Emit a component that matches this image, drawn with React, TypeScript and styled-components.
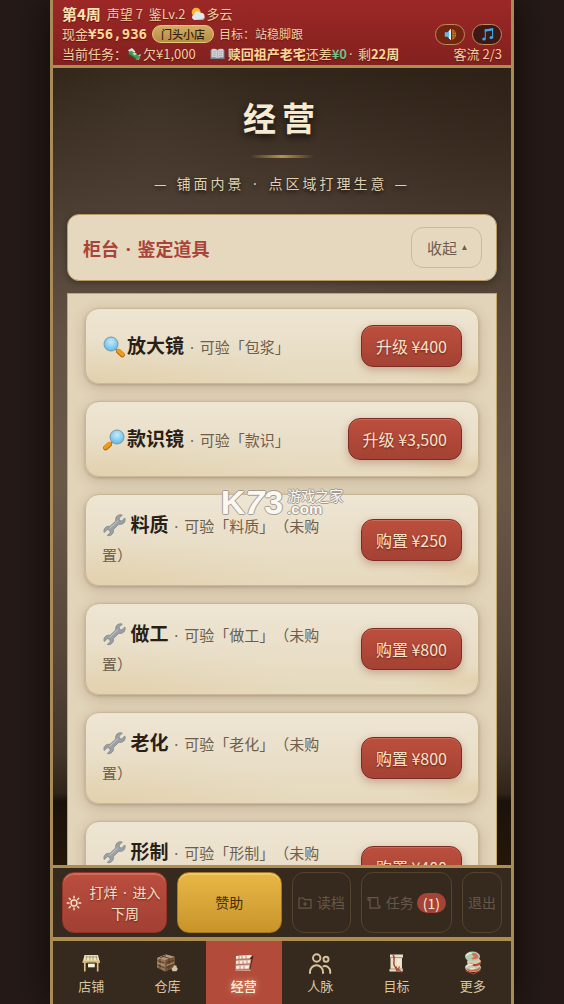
import React from "react";
import styled, { createGlobalStyle, css } from "styled-components";

const sans = '"Noto Sans CJK SC", "Noto Sans", sans-serif';

const GlobalStyle = createGlobalStyle`
  *, *::before, *::after { box-sizing: border-box; }
  body {
    margin: 0;
    background: #251a17;
    font-family: ${sans};
    text-spacing-trim: space-all;
  }
  h1, h2, p, ul { margin: 0; padding: 0; }
  ul { list-style: none; }
  button { font-family: inherit; cursor: pointer; margin: 0; }
  svg { display: block; flex: none; }
`;

const Frame = styled.div`
  position: relative;
  display: flex;
  flex-direction: column;
  width: 100%;
  max-width: 464px;
  height: 100vh;
  margin: 0 auto;
  border: 0 solid #a88b56;
  border-width: 0 3px;
  background: #382a1f;
  box-shadow: 0 0 36px rgba(8, 4, 3, 0.7);
`;

/* Latin-width middle dot used as a separator inside Chinese text. */
const DotMark = styled.span`
  margin: 0 2px;
  font-family: "Noto Sans", sans-serif;
  line-height: 1;
`;

const Dot = () => <DotMark> · </DotMark>;

/* ---------- status header ---------- */

const Header = styled.header`
  flex: none;
  padding: 4px 9px 1px;
  border-bottom: 3px solid #ae8d52;
  background: linear-gradient(#9c2826, #82211f);
  color: #f3cf9f;
  font-size: 13px;
  line-height: 20px;
`;

const StatusRow = styled.div`
  display: flex;
  align-items: center;
  height: 20px;
  white-space: nowrap;
  text-shadow: 0 1px 1px rgba(60, 0, 0, 0.5);
`;

const Week = styled.strong`
  margin-right: 6px;
  color: #fbe2b0;
  font-size: 15px;
`;

const Weather = styled.span`
  display: flex;
  align-items: center;
  gap: 1px;
  margin-left: 6px;
`;

const Cash = styled.strong`
  color: #ffd795;
  font-family: "DejaVu Sans Mono", monospace;
  font-size: 14px;
`;

const Rank = styled.span`
  margin: 0 5px;
  padding: 0 8px;
  border: 1px solid #e8c77b;
  border-radius: 9px;
  background: linear-gradient(#d3ad63, #b58c45);
  color: #35200c;
  font-size: 11px;
  font-weight: 500;
  line-height: 16px;
  text-shadow: none;
`;

const Small = styled.span`
  font-size: 12px;
`;

const Debt = styled.span`
  display: flex;
  align-items: center;
  gap: 1px;
  margin-right: 14px;
`;

const Gold = styled.strong`
  color: #ffd795;
`;

const Green = styled.strong`
  color: #6fc08a;
`;

const Right = styled.span`
  display: flex;
  gap: 7px;
  margin-left: auto;
`;

const SoundButton = styled.button<{ $dark?: boolean }>`
  display: flex;
  align-items: center;
  justify-content: center;
  width: 30px;
  height: 21px;
  padding: 0;
  border: 1px solid #c08a5c;
  border-radius: 11px;
  background: ${(p) => (p.$dark ? "#3c1914" : "#74250f")};
`;

/* ---------- main area ---------- */

const Main = styled.main`
  flex: 1;
  min-height: 0;
  padding: 25px 14px 0;
  overflow-y: auto;
  scrollbar-width: none;
  background:
    radial-gradient(ellipse at 22% 5%, rgba(120, 108, 90, 0.1), transparent 22%),
    radial-gradient(ellipse at 100% 4%, rgba(30, 14, 4, 0.25), transparent 36%),
    linear-gradient(
      #32261b 0%, #43352a 12%, #54463a 24%, #625142 33%, #6a5847 52%,
      #58483a 72%, #43352a 86%, #302419 91%, #1a120a 92%, #241709 100%
    );
`;

const Title = styled.h1`
  color: #f7ead2;
  font-size: 33px;
  font-weight: 700;
  letter-spacing: 6px;
  line-height: 48px;
  text-align: center;
  text-shadow: 0 3px 7px rgba(0, 0, 0, 0.7);
`;

const Rule = styled.div`
  width: 64px;
  height: 3px;
  margin: 14px auto;
  background: linear-gradient(90deg, transparent, #b5924f 50%, transparent);
`;

const Subtitle = styled.p`
  display: flex;
  justify-content: center;
  gap: 7px;
  color: #dfd0b1;
  font-size: 14px;
  letter-spacing: 3px;
  line-height: 22px;
  text-shadow: 0 2px 4px rgba(0, 0, 0, 0.8);
`;

const SectionHead = styled.div`
  display: flex;
  align-items: center;
  justify-content: space-between;
  margin: 20px 0 12px;
  padding: 12px 14px 12px 15px;
  border: 1px solid #b89a62;
  border-radius: 12px;
  background: #e5d8be;
  box-shadow: 0 2px 6px rgba(0, 0, 0, 0.3);
`;

const SectionTitle = styled.h2`
  color: #a94439;
  font-size: 18px;
  font-weight: 700;
  line-height: 26px;
`;

const FoldButton = styled.button`
  display: flex;
  align-items: center;
  gap: 5px;
  height: 41px;
  padding: 0 14px 0 15px;
  border: 1px solid #c8bb9e;
  border-radius: 12px;
  background: transparent;
  color: #6c5e50;
  font-size: 15px;
`;

const ToolList = styled.ul`
  display: flex;
  flex-direction: column;
  gap: 17px;
  padding: 14px 17px;
  border: 1px solid #c4a767;
  background: #e2d4b9;
`;

const ToolItem = styled.li`
  display: flex;
  align-items: center;
  justify-content: space-between;
  gap: 16px;
  padding: 16px;
  border: 1px solid #c9b795;
  border-radius: 14px;
  background:
    radial-gradient(ellipse at 0% 100%, rgba(218, 190, 140, 0.3), transparent 40%),
    radial-gradient(ellipse at 100% 85%, rgba(218, 188, 135, 0.3), transparent 14%),
    linear-gradient(#eee5d3, #e9dfc9 50%, #e6d9bc);
  box-shadow: 0 4px 14px rgba(90, 60, 40, 0.22), 0 1px 3px rgba(90, 60, 40, 0.25);
`;

const ToolText = styled.p`
  color: #6d5e4e;
  font-size: 15px;
  line-height: 29px;

  svg {
    display: inline-block;
    vertical-align: -5px;
  }
`;

const ToolName = styled.strong`
  color: #2a1f16;
  font-size: 19px;
  line-height: 20px;
`;

const BuyButton = styled.button`
  flex: none;
  height: 42px;
  padding: 0 14px;
  border: 1px solid #7c2b22;
  border-radius: 12px;
  background: linear-gradient(#bc4f3e, #a44233);
  box-shadow: 0 3px 8px rgba(120, 40, 30, 0.3), inset 0 1px 0 rgba(255, 190, 160, 0.25);
  color: #fae3c9;
  font-size: 16px;
  text-shadow: 0 1px 2px rgba(60, 0, 0, 0.6);
`;

/* ---------- action bar ---------- */

const ActionBar = styled.div`
  display: flex;
  flex: none;
  gap: 10px;
  height: 72px;
  padding: 4px 9px;
  border-top: 3px solid #ae8d52;
  background: #36291e;
`;

const actionKinds = {
  red: css`
    flex: 1;
    padding: 0 3px;
    border-color: #963428;
    background: linear-gradient(#bb4e3f, #a14033);
    box-shadow: inset 0 2px 0 rgba(255, 180, 150, 0.3);
    color: #f8e2c6;
    text-shadow: 0 1px 2px rgba(60, 0, 0, 0.5);
  `,
  gold: css`
    flex: 1;
    padding: 0 3px;
    border-color: #a87a20;
    background: linear-gradient(#e8b846, #c8942b);
    box-shadow: inset 0 2px 0 rgba(255, 235, 160, 0.35);
    color: #462d0e;
  `,
  ghost: css`
    padding: 0 5px;
    border-color: #53432f;
    background: transparent;
    color: #65584a;
  `,
};

const ActionButton = styled.button<{ $kind: keyof typeof actionKinds }>`
  display: flex;
  align-items: center;
  justify-content: center;
  gap: 5px;
  border: 1px solid;
  border-radius: 12px;
  font-size: 14px;
  line-height: 21px;
  white-space: nowrap;
  ${(p) => actionKinds[p.$kind]}
`;

const Wrapping = styled.span`
  white-space: normal;
  text-align: center;
`;

const Labelled = styled.span`
  display: flex;
  align-items: center;
  gap: 3px;
`;

const Count = styled.span`
  padding: 0 6px;
  border-radius: 10px;
  background: #a44437;
  color: #fbe9d3;
  line-height: 20px;
`;

/* ---------- tab bar ---------- */

const TabBar = styled.nav`
  display: grid;
  flex: none;
  grid-template-columns: repeat(6, 1fr);
  height: 67px;
  border-top: 4px solid #ae8d52;
  background: #36291e;
`;

const Tab = styled.a<{ $active?: boolean }>`
  display: flex;
  flex-direction: column;
  align-items: center;
  padding-top: 10px;
  gap: 1px;
  background: ${(p) => (p.$active ? "#b34b3a" : "transparent")};
  color: ${(p) => (p.$active ? "#fff0da" : "#d8c6a3")};
  font-size: 13px;
  font-weight: ${(p) => (p.$active ? 500 : 400)};
  line-height: 20px;
  text-decoration: none;
  text-shadow: ${(p) => (p.$active ? "0 0 6px rgba(255, 230, 190, 0.6)" : "none")};
`;

/* ---------- site watermark ---------- */

const Watermark = styled.div`
  position: absolute;
  top: 50%;
  left: 50%;
  display: flex;
  align-items: center;
  gap: 4px;
  transform: translate(-50%, -50%);
  color: #fbf8f2;
  pointer-events: none;
  white-space: nowrap;
  text-shadow: 1px 0 #a39c94, -1px 0 #a39c94, 0 1px #a39c94, 0 -1px #a39c94;
`;

const MarkLogo = styled.span`
  font-family: "Liberation Sans", sans-serif;
  font-size: 34px;
  font-weight: 700;
  line-height: 30px;

  i { font-style: italic; }
`;

const MarkText = styled.span`
  display: flex;
  flex-direction: column;
  font-size: 14px;
  line-height: 14px;
`;

const MarkDomain = styled.span`
  font-family: "Liberation Sans", sans-serif;
  font-size: 15px;
  font-weight: 700;
  line-height: 14px;
`;

/* ---------- drawings ---------- */

const CloudSun = () => (
  <svg width="14" height="14" viewBox="0 0 14 14" aria-hidden="true">
    <circle cx="5.2" cy="5.2" r="4.4" fill="#f8b62e" />
    <path d="M3.4 13a2.8 2.8 0 0 1-.3-5.5 3.6 3.6 0 0 1 6.6-1.6 3.2 3.2 0 0 1 3.8 3.6A2.7 2.7 0 0 1 11 13z" fill="#dfe7ef" />
    <path d="M3.4 13h7.6a2.7 2.7 0 0 0 2.5-2.5c-2.5 1.8-6 1.6-10.1 2.5z" fill="#a9bacb" />
  </svg>
);

const FlyingMoney = () => (
  <svg width="15" height="14" viewBox="0 0 15 14" aria-hidden="true">
    <path d="M1 3.2 5 1l3.4 3.4-3 3z" fill="#dfe8e8" />
    <path d="M8.5 9.5 14 7l-2 5.5-3 .8z" fill="#cbd7d8" />
    <path d="M1.2 6.2 4 3.6l9.6 6.2-3 2.8z" fill="#3f9d57" />
    <path d="m5.6 6.8 2-1.6 2.2 1.5-2 1.8z" fill="#b9e3ae" />
    <path d="m1.2 6.2 9.4 6.4v.9L1 7.2z" fill="#23683a" />
  </svg>
);

const OpenBook = () => (
  <svg width="15" height="14" viewBox="0 0 15 14" aria-hidden="true">
    <path d="M.5 3h14v9H.5z" fill="#77828c" />
    <path d="M1.5 2.2c2.5-.7 4.5-.4 6 .7 1.5-1.1 3.5-1.4 6-.7v8.400c-2.500-.5-4.500-.3-6 .6-1.500-.9-3.500-1.100-6-.6z" fill="#ccd0d4" />
    <path d="M7.500 3v8M3 4.500h3M3 6.500h3M3 8.500h3M9 4.500h3M9 6.500h3M9 8.500h3" stroke="#a9b0b6" strokeWidth=".8" fill="none" />
  </svg>
);

const Speaker = () => (
  <svg width="13" height="13" viewBox="0 0 13 13" aria-hidden="true">
    <path d="M.8 4.300h2.600L7 .800v11.400L3.400 8.700H.8z" fill="#62b7ee" />
    <path d="M5 2.800 7 .800v11.400L5 10.200z" fill="#d8edf8" />
    <path d="M8.300 1.200c5 1.600 5 9 0 10.600z" fill="#d98324" />
    <path d="M8.300 4h3.400M8.300 6.500h4M8.300 9h3.400M10.200 2.300v8.400" stroke="#7b3c0b" strokeWidth=".6" />
  </svg>
);

const MusicNote = () => (
  <svg width="13" height="13" viewBox="0 0 13 13" aria-hidden="true">
    <path d="M4.300 10.500V2l7.300-1.200v8.600" fill="none" stroke="#3ea6e4" strokeWidth="1.100" />
    <path d="M3.800 1.500 12.100.2v2.300L3.800 3.800z" fill="#3ea6e4" />
    <ellipse cx="3" cy="10.900" rx="1.800" ry="1.500" fill="#3ea6e4" />
    <ellipse cx="10.300" cy="9.600" rx="1.800" ry="1.500" fill="#3ea6e4" />
  </svg>
);

const Magnifier = ({ flip }: { flip?: boolean }) => (
  <svg width="25" height="23" viewBox="0 0 25 23" aria-hidden="true">
    <defs>
      <radialGradient id={flip ? "lensR" : "lensL"} cx="50%" cy="35%" r="65%">
        <stop offset="0" stopColor="#c6ebfb" />
        <stop offset="1" stopColor="#5fb8e4" />
      </radialGradient>
    </defs>
    <g transform={flip ? "matrix(-1 0 0 1 24 0)" : undefined}>
      <path d="m13.500 14 3 2.500" stroke="#718c9b" strokeWidth="2" />
      <path d="m16.600 16.400 3.800 3.500" stroke="#ad6309" strokeWidth="5" strokeLinecap="round" />
      <path d="m16.600 15.900 3.800 3.500" stroke="#f09a20" strokeWidth="4" strokeLinecap="round" />
      <circle cx="9" cy="9" r="7" fill={flip ? "url(#lensR)" : "url(#lensL)"} stroke="#7499ad" strokeWidth="1" />
    </g>
  </svg>
);

const Wrench = () => (
  <svg width="25" height="23" viewBox="0 0 25 23" aria-hidden="true">
    <path
      d="M15.500 1.600c1.600-1 3.500-1.100 4.800-.4l-3.200 2.900.4 2.400 2.300.5 3-3.100c.8 1.700.3 3.800-1 5.100-1.400 1.400-3.300 1.700-4.900 1.200l-5.500 5.300c.3 2-.1 3.500-1.300 4.700-1.400 1.400-3.300 1.800-4.800 1.200l2.900-2.900-.6-2.300-2.300-.6-3 3c-.8-1.600-.4-3.500.9-4.900 1.300-1.300 3-1.700 4.700-1.300l5.800-5.400c-.4-2 .3-4.300 1.800-5.400z"
      fill="#9aa0a3"
      stroke="#777e82"
      strokeWidth=".7"
    />
    <path d="m7.500 14.500 8.500-8" stroke="#c5cacc" strokeWidth="1" />
  </svg>
);

const Sun = () => (
  <svg width="16" height="16" viewBox="0 0 16 16" fill="none" stroke="#f8e2c6" strokeWidth="1.400" strokeLinecap="round" aria-hidden="true">
    <circle cx="8" cy="8" r="3" />
    <path d="M8 1.200v1.900M8 12.900v1.900M1.200 8h1.900M12.900 8h1.900M3.200 3.200l1.300 1.300M11.500 11.500l1.300 1.300M3.200 12.800l1.300-1.300M11.500 4.500l1.300-1.300" />
  </svg>
);

const FolderPlus = () => (
  <svg width="14" height="14" viewBox="0 0 14 14" fill="none" stroke="currentColor" strokeWidth="1.200" strokeLinejoin="round" aria-hidden="true">
    <path d="M1 2h4.200l1.500 1.700H13v8.500H1zM7 6v4M5 8h4" />
  </svg>
);

const Scroll = () => (
  <svg width="14" height="14" viewBox="0 0 14 14" fill="none" stroke="currentColor" strokeWidth="1.200" strokeLinejoin="round" aria-hidden="true">
    <path d="M1 4.200V1.700h9.800v7.600M3 4.200H1M3 1.700v10.500h9.800V9.800h-2" />
  </svg>
);

const StallIcon = () => (
  <svg width="24" height="24" viewBox="0 0 24 24" aria-hidden="true">
    <path d="M5.500 4h13.500l1.500 6H4z" fill="#f1e6bd" />
    <path d="M6.500 6h12M8 4.500l-1 5M11 4.500v5M14 4.500v5M17 4.500l1 5" stroke="#96835c" strokeWidth=".7" />
    <path d="M3.500 9.700h17.500v2.300H3.500z" fill="#d5b775" />
    <path d="M5.800 11v9.500M18.700 11v9.500" stroke="#d6c184" strokeWidth="1.700" />
    <path d="M9 12.500h6.800v3.800H9z" fill="#f7f3e4" />
    <path d="M8 12h9" stroke="#5c4a25" />
  </svg>
);

const CrateIcon = () => (
  <svg width="24" height="24" viewBox="0 0 24 24" aria-hidden="true">
    <path d="m2 7 9-3.500 8.500 2.300v10.500L10 20.500 2 16.500z" fill="#967555" />
    <path d="m2 7 9-3.500 8.500 2.300L10.500 9z" fill="#b8977a" />
    <path d="m10.500 9 9-3.200v10.500L10 20.500z" fill="#745439" />
    <path d="m2.500 9.500 7 2.500M2.500 14l7 2.800M11 12l8-2.800M11 17l8-3.500M5 8v9.500M14 8v10.500M7 5.200l8 2.300M5 7l6-2.500" stroke="#4a3424" strokeWidth=".8" />
    <path d="m2.500 12 7 2.500M11.500 14.500l7.500-3" stroke="#c0a078" strokeWidth=".8" />
    <path d="M18.500 14.500h3v1.500l1.300 1.800-1.300 2.400h-4l-1-2.500 2-1.700z" fill="#d3c3a3" />
  </svg>
);

const ShelfIcon = () => (
  <svg width="24" height="24" viewBox="0 0 24 24" aria-hidden="true">
    <path d="m4 5 16.500-1-2.200 16H3.500z" fill="#d8a591" />
    <path d="m4 5 15-1-.4 3L4 7.800zM4 10l14-.8-.3 3L4 12.800zM4.200 15l12.800-.5-.3 3-12.500.3z" fill="#f7eee2" />
    <path d="M4 8.800 19 8M4 13.800l14-.8M4 19l13.500-.5M7 5v3M10 5v3M14 4.500v3M7 10v3M11 10v3M15 9.500v3M8 15v3M12 15v3" stroke="#a55c4d" strokeWidth=".7" />
    <path d="m20.800 4.500-3 14" stroke="#572820" strokeWidth="1.200" />
    <path d="m18.500 8 1.500-2" stroke="#352019" strokeWidth="1.500" />
  </svg>
);

const PeopleIcon = () => (
  <svg width="24" height="24" viewBox="0 0 24 24" fill="none" stroke="#d8c39b" strokeWidth="2" strokeLinecap="round" aria-hidden="true">
    <circle cx="8.700" cy="7" r="3.700" />
    <circle cx="18" cy="8.300" r="2.500" />
    <path d="M2 22v-1.200a6.500 6.500 0 0 1 13 0V22M15.500 15.200a5.400 5.400 0 0 1 6.700 5.200V22" />
  </svg>
);

const GoalIcon = () => (
  <svg width="24" height="24" viewBox="0 0 24 24" aria-hidden="true">
    <path d="M6 3.500h13V7h-1v10.500h.8v3H5.500V18h1V7H6z" fill="#eadfc8" />
    <path d="M6 6.500h13M6 18h13" stroke="#a38265" strokeWidth=".8" />
    <path d="M9 3.500c3 3.500-.5 7.500 1.300 11 1 2 2.500 2.500 2.700 6" stroke="#9d4430" strokeWidth="1.400" fill="none" />
    <path d="m12 15.500 2 4 1.500-4M14 18l4 3.500" stroke="#9d4c34" strokeWidth="1.100" fill="none" />
    <path d="M14 8v6M16 8v5" stroke="#f8f1e1" strokeWidth="1" />
  </svg>
);

const MoreIcon = () => (
  <svg width="24" height="24" viewBox="0 0 24 24" aria-hidden="true">
    <path d="m3 19 9-3 9 3-8.500 5z" fill="#5b211a" />
    <path d="m4.500 20 8 3 7-3.500" stroke="#a94631" fill="none" />
    <ellipse cx="12" cy="16.500" rx="8" ry="4.500" fill="#c2cbb0" />
    <path d="M5.300 17c4 3 10 2 13.500-1l.2 2c-4 3.500-10 3-12.500 1z" fill="#c96d4e" />
    <ellipse cx="13" cy="11" rx="7" ry="4.500" fill="#dcc9a9" />
    <path d="M9 12c4 2 8 1 11-1.500v2c-3 3-7 3.500-10 1.500z" fill="#b3482f" />
    <ellipse cx="11.500" cy="5.500" rx="7.500" ry="5" fill="#b2cdb5" />
    <path d="M10 3c4-2.500 7 0 7.500 2.500S13 9 10 8l3-2.500z" fill="#d4715a" />
    <path d="M5 5c2-3 4-3 6-3M5 16c2-2 5-3 7-2M9 18l5-1" stroke="#f5ecd6" strokeWidth="1.200" fill="none" />
  </svg>
);

/* ---------- data ---------- */

const tools = [
  { name: "放大镜", note: "可验「包浆」", action: "升级 ¥400", icon: <Magnifier /> },
  { name: "款识镜", note: "可验「款识」", action: "升级 ¥3,500", icon: <Magnifier flip /> },
  { name: "料质", note: "可验「料质」（未购置）", action: "购置 ¥250", icon: <><Wrench />{" "}</> },
  { name: "做工", note: "可验「做工」（未购置）", action: "购置 ¥800", icon: <><Wrench />{" "}</> },
  { name: "老化", note: "可验「老化」（未购置）", action: "购置 ¥800", icon: <><Wrench />{" "}</> },
  { name: "形制", note: "可验「形制」（未购置）", action: "购置 ¥400", icon: <><Wrench />{" "}</> },
];

const tabs = [
  { label: "店铺", icon: <StallIcon /> },
  { label: "仓库", icon: <CrateIcon /> },
  { label: "经营", icon: <ShelfIcon />, active: true },
  { label: "人脉", icon: <PeopleIcon /> },
  { label: "目标", icon: <GoalIcon /> },
  { label: "更多", icon: <MoreIcon /> },
];

export default function App() {
  return (
    <>
      <GlobalStyle />
      <Frame>
        <Header>
          <StatusRow>
            <Week>第4周</Week>
            <span>声望 7&nbsp; 鉴Lv.2</span>
            <Weather><CloudSun />多云</Weather>
          </StatusRow>
          <StatusRow>
            <span>现金</span>
            <Cash>¥56,936</Cash>
            <Rank>门头小店</Rank>
            <Small>目标：站稳脚跟</Small>
            <Right>
              <SoundButton aria-label="音效"><Speaker /></SoundButton>
              <SoundButton $dark aria-label="音乐"><MusicNote /></SoundButton>
            </Right>
          </StatusRow>
          <StatusRow>
            <span>当前任务：</span>
            <Debt><FlyingMoney />欠¥1,000</Debt>
            <OpenBook />&nbsp;
            <Gold>赎回祖产老宅</Gold>
            <span>还差</span>
            <Green>¥0</Green>
            <span><Dot />剩</span>
            <Gold>22周</Gold>
            <Right>客流 2/3</Right>
          </StatusRow>
        </Header>

        <Main>
          <Title>经营</Title>
          <Rule />
          <Subtitle>
            <span>—</span>
            <span>铺面内景<Dot />点区域打理生意</span>
            <span>—</span>
          </Subtitle>
          <SectionHead>
            <SectionTitle>柜台<Dot />鉴定道具</SectionTitle>
            <FoldButton>
              收起
              <svg width="5" height="5" viewBox="0 0 5 5" aria-hidden="true">
                <path d="M2.500 0 5 5H0z" fill="#6c5e50" />
              </svg>
            </FoldButton>
          </SectionHead>
          <ToolList>
            {tools.map((tool) => (
              <ToolItem key={tool.name}>
                <ToolText>
                  {tool.icon}
                  <ToolName>{tool.name}</ToolName>
                  <Dot />
                  {tool.note}
                </ToolText>
                <BuyButton>{tool.action}</BuyButton>
              </ToolItem>
            ))}
          </ToolList>
        </Main>

        <ActionBar>
          <ActionButton $kind="red">
            <Sun />
            <Wrapping>打烊<Dot />进入下周</Wrapping>
          </ActionButton>
          <ActionButton $kind="gold">赞助</ActionButton>
          <ActionButton $kind="ghost"><FolderPlus />读档</ActionButton>
          <ActionButton $kind="ghost">
            <Scroll />
            <Labelled>任务<Count>(1)</Count></Labelled>
          </ActionButton>
          <ActionButton $kind="ghost">退出</ActionButton>
        </ActionBar>

        <TabBar>
          {tabs.map((tab) => (
            <Tab key={tab.label} href="#" $active={tab.active} aria-current={tab.active ? "page" : undefined}>
              {tab.icon}
              {tab.label}
            </Tab>
          ))}
        </TabBar>

        <Watermark>
          <MarkLogo>K<i>7</i>3</MarkLogo>
          <MarkText>
            游戏之家
            <MarkDomain>.com</MarkDomain>
          </MarkText>
        </Watermark>
      </Frame>
    </>
  );
}
